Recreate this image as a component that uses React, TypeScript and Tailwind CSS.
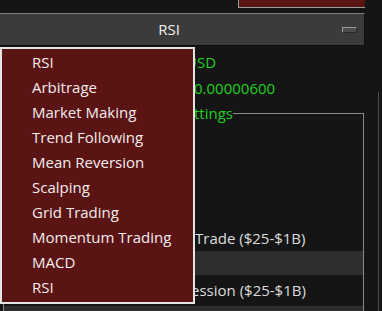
import { useState } from 'react';

const strategies = [
  'RSI',
  'Arbitrage',
  'Market Making',
  'Trend Following',
  'Mean Reversion',
  'Scalping',
  'Grid Trading',
  'Momentum Trading',
  'MACD',
  'RSI',
];

export default function App() {
  const [selected, setSelected] = useState('RSI');
  const [open, setOpen] = useState(true);

  return (
    <div
      className="relative h-[311px] w-[382px] overflow-hidden bg-[#151515] text-[15px]"
      style={{ fontFamily: '"Open Sans", "Noto Sans", sans-serif' }}
    >
      <div className="h-[13px]">
        <div className="ml-[238px] h-[8px] w-[127px] border-b border-l border-[#9a9a9a] bg-[#5a1414]" />
      </div>

      <div className="flex h-[33px] w-[365px] items-center border-t border-r border-b border-t-[#7e7e7e] border-r-[#101010] border-b-[#0c0c0c] bg-[#3b3b3b]">
        <button
          type="button"
          onClick={() => setOpen(!open)}
          className="flex-1 text-center leading-none text-[#f2f2f2]"
        >
          {selected}
        </button>
        <div className="flex w-[26px] items-center">
          <div className="ml-[4px] h-[6px] w-[15px] border border-t-[#9c9c9c] border-l-[#9c9c9c] border-r-[#2a2a2a] border-b-[#2a2a2a] bg-[#4c4c4c]" />
        </div>
      </div>

      <div className="flex">
        <div className="w-[365px]">
          <div className="flex h-[29px] items-end pl-[186px] text-[#1fcf1f]">
            <span className="leading-[25px]">USD</span>
          </div>
          <div className="flex h-[26px] items-center pl-[194px] text-[#1fcf1f]">0.00000600</div>

          <div className="ml-[3px] w-[361px]">
            <div className="flex h-[24px] items-center">
              <span className="w-[230px] text-right leading-none text-[#1fcf1f]">Strategy Settings</span>
              <div className="mt-[12px] h-[12px] flex-1 border-t border-r border-[#8a8a8a]" />
            </div>
            <div className="h-[200px] border-r border-l border-[#8a8a8a]">
              <div className="h-[100px]" />
              <div className="flex h-[26px] items-center pl-[191px] text-[#dcdcdc]">Trade ($25-$1B)</div>
              <div className="h-[24px] bg-[#2e2e2e]" />
              <div className="flex h-[31px] items-center pl-[187px] text-[#dcdcdc]">ession ($25-$1B)</div>
              <div className="h-[19px] bg-[#2e2e2e]" />
            </div>
          </div>
        </div>
        <div className="pt-[46px]">
          <div className="ml-[13px] h-[240px] border-l border-[#505050]" />
        </div>
      </div>

      {open ? (
        <div className="absolute left-0 top-[47px] w-[195px] border-2 border-[#e4e4e4] bg-[#5a1414] pt-px pb-[2px]">
          {strategies.map((name, index) => (
            <button
              key={`${name}-${index}`}
              type="button"
              onClick={() => {
                setSelected(name);
                setOpen(false);
              }}
              className="block h-[25px] w-full pl-[30px] text-left leading-[25px] text-[#f4ecec]"
            >
              {name}
            </button>
          ))}
        </div>
      ) : null}
    </div>
  );
}
